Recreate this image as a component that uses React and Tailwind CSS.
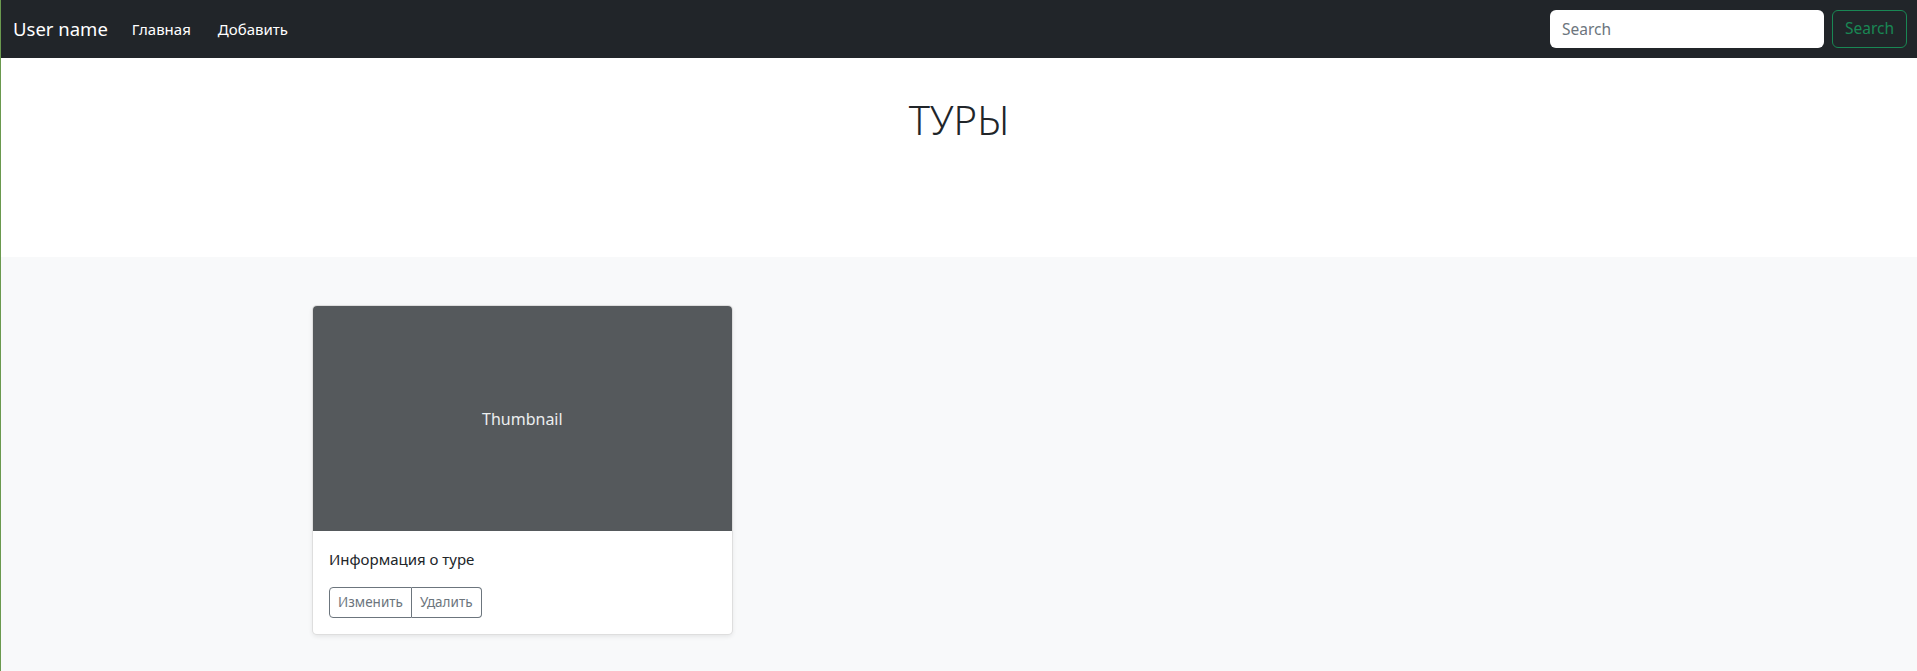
const font = { fontFamily: '"Noto Sans", "Open Sans", sans-serif' };

const tours = [{ id: 1, info: 'Информация о туре' }];

const Navbar = () => (
  <nav className="h-[58px] bg-[#212529] flex items-center justify-between pl-3 pr-[10px]">
    <div className="flex items-center">
      <a className="text-white text-[18.5px] mr-4">User name</a>
      <a className="text-white text-[15px] px-2">Главная</a>
      <a className="text-white text-[15px] px-2 ml-[11px]">Добавить</a>
    </div>
    <form className="flex items-center gap-2">
      <input
        className="w-[274px] h-[38px] rounded-md bg-white px-3 text-[15.5px] text-[#212529] placeholder:text-[#6c757d] outline-none"
        placeholder="Search"
      />
      <button type="button" className="w-[75px] h-[38px] rounded-md border border-[#198754] text-[#198754] text-[15.5px]">
        Search
      </button>
    </form>
  </nav>
);

const TourCard = ({ info }) => (
  <div className="bg-white rounded-[5px] border border-black/[0.13] shadow-[0_2px_4px_rgba(0,0,0,0.075)] overflow-hidden">
    <div className="h-[225px] bg-[#55595c] flex items-center justify-center">
      <span className="text-[#eceeef] text-[16px]">Thumbnail</span>
    </div>
    <div className="p-4">
      <p className="text-[15px] leading-6 text-[#212529] mb-4">{info}</p>
      <div className="flex">
        <button type="button" className="h-[31px] px-2 text-[13.5px] text-[#6c757d] border border-[#6c757d] rounded-l">
          Изменить
        </button>
        <button type="button" className="h-[31px] px-2 text-[13.5px] text-[#6c757d] border border-l-0 border-[#6c757d] rounded-r">
          Удалить
        </button>
      </div>
    </div>
  </div>
);

export default function App() {
  return (
    <div className="min-h-[671px] bg-[#f8f9fa] border-l border-[#6a994e]" style={font}>
      <Navbar />

      {/* Header */}
      <section className="bg-white h-[199px] pt-[96px] text-center">
        <h1 className="text-[40px] leading-[48px] font-light text-[#212529] -mt-[58px]">ТУРЫ</h1>
      </section>

      {/* Album */}
      <div className="py-12">
        <div className="w-[1320px] mx-auto px-[13px] grid grid-cols-3 gap-4">
          {tours.map((t) => (
            <TourCard key={t.id} info={t.info} />
          ))}
        </div>
      </div>
    </div>
  );
}
